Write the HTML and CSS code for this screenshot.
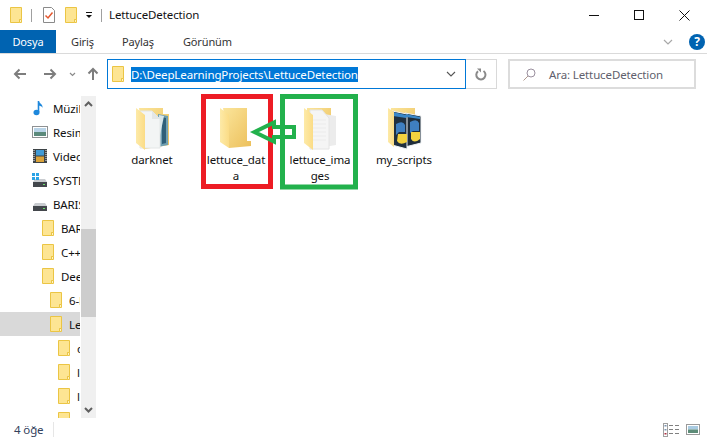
FILE: index.html
```html
<!DOCTYPE html>
<html lang="tr">
<head>
<meta charset="utf-8">
<title>LettuceDetection</title>
<link rel="stylesheet" href="styles.css">
</head>
<body>
<svg class="defs" width="0" height="0" aria-hidden="true">
  <defs>
    <symbol id="mini" viewBox="0 0 16 16">
      <path d="M2.500 .5H13.500V12.500H11.500V15.500H2.500Z" fill="#fde593" stroke="#ebc544"/>
      <path d="M11.500 15.500V12.500H13.500V15.500Z" fill="#fff3c4" stroke="#ebc544"/>
    </symbol>
    <linearGradient id="back" x1="0" y1="0" x2="1" y2="1">
      <stop offset="0" stop-color="#fbe59b"/><stop offset="1" stop-color="#ecbf5a"/>
    </linearGradient>
    <linearGradient id="flap" x1="0" y1="0" x2="1" y2="0">
      <stop offset="0" stop-color="#fdeaa8"/><stop offset="1" stop-color="#fbdc86"/>
    </linearGradient>
    <symbol id="drive" viewBox="0 0 16 16">
      <path d="M3 7H13L15 10H1Z" fill="#c9ccd0"/>
      <rect x="1" y="10" width="14" height="5" fill="#43474c"/>
      <rect x="11" y="12" width="2" height="1" fill="#6de06d"/>
    </symbol>
  </defs>
</svg>

<header class="titlebar">
  <svg class="q-folder" width="16" height="16"><use href="#mini"/></svg>
  <span class="q-sep"></span>
  <svg class="q-check" width="14" height="16" viewBox="0 0 14 16">
    <path d="M1.500 .5H9.500L12.500 3.500V15.500H1.500Z" fill="#fff" stroke="#8a8a8a"/>
    <path d="M3.500 8.500L6 11L10.500 5.500" fill="none" stroke="#e4572e" stroke-width="1.500"/>
  </svg>
  <svg class="q-folder2" width="16" height="16"><use href="#mini"/></svg>
  <svg class="q-drop" width="8" height="8" viewBox="0 0 8 8">
    <rect x="1" y="1" width="6" height="1" fill="#111"/><path d="M1 4H7L4 7Z" fill="#111"/>
  </svg>
  <span class="q-sep q-sep-2"></span>
  <span class="title">LettuceDetection</span>
  <div class="win-controls">
    <svg width="10" height="10" viewBox="0 0 10 10"><rect y="5" width="10" height="1" fill="#111"/></svg>
    <svg width="10" height="10" viewBox="0 0 10 10"><rect x=".5" y=".5" width="9" height="9" fill="none" stroke="#111"/></svg>
    <svg width="11" height="11" viewBox="0 0 11 11"><path d="M.5 .5L10.500 10.500M10.500 .5L.5 10.500" stroke="#111" fill="none"/></svg>
  </div>
</header>

<nav class="ribbon">
  <span class="tab tab-file">Dosya</span>
  <span class="tab tab-home">Giriş</span>
  <span class="tab tab-share">Paylaş</span>
  <span class="tab tab-view">Görünüm</span>
  <svg class="ribbon-chev" width="10" height="6" viewBox="0 0 10 6"><path d="M1 1L5 5L9 1" fill="none" stroke="#a8a8a8" stroke-width="1.200"/></svg>
  <span class="help">?</span>
</nav>

<div class="addressrow">
  <svg class="nav-arrow nav-back" width="14" height="12" viewBox="0 0 14 12"><path d="M13 6H2M6.500 1.500L2 6L6.500 10.500" fill="none" stroke="#7d7d7d" stroke-width="2"/></svg>
  <svg class="nav-arrow nav-fwd" width="14" height="12" viewBox="0 0 14 12"><path d="M1 6H12M7.500 1.500L12 6L7.500 10.500" fill="none" stroke="#7d7d7d" stroke-width="2"/></svg>
  <svg class="nav-down" width="7" height="5" viewBox="0 0 7 5"><path d="M1 1L3.500 3.500L6 1" fill="none" stroke="#8a8a8a" stroke-width="1.200"/></svg>
  <svg class="nav-up" width="12" height="14" viewBox="0 0 12 14"><path d="M6 13V2M1.500 6.500L6 2L10.500 6.500" fill="none" stroke="#7d7d7d" stroke-width="2"/></svg>
  <div class="addressbox">
    <svg width="16" height="16"><use href="#mini"/></svg>
    <span class="path">D:\DeepLearningProjects\LettuceDetection</span>
    <svg class="addr-chev" width="10" height="6" viewBox="0 0 10 6"><path d="M1 1L5 5L9 1" fill="none" stroke="#555" stroke-width="1.100"/></svg>
  </div>
  <div class="refresh">
    <svg width="12" height="13" viewBox="0 0 12 13"><path d="M8.500 3A4.600 4.600 0 1 1 3 3.200" fill="none" stroke="#8a8a8a" stroke-width="2"/><path d="M2 .5H6V4.500Z" fill="#8a8a8a"/></svg>
  </div>
  <div class="searchbox">
    <svg width="13" height="13" viewBox="0 0 13 13"><circle cx="8" cy="5" r="4" fill="none" stroke="#9a8f9e"/><path d="M5 8L.5 12.500" stroke="#b09a8f" fill="none"/></svg>
    <span>Ara: LettuceDetection</span>
  </div>
</div>

<main class="body">
  <aside class="sidebar">
    <div class="tree">
      <div class="row lv0">
        <svg class="ti" width="16" height="16" viewBox="0 0 16 16"><path d="M6.500 1V12" stroke="#1e88dc" stroke-width="1.600"/><ellipse cx="4.500" cy="12.500" rx="3" ry="2.700" fill="#1e88dc"/><path d="M6.500 1C8 4 11 4 10.500 8C10 6 8 6 6.500 5.500Z" fill="#1e88dc"/></svg>
        <span class="lbl">Müzik</span></div>
      <div class="row lv0">
        <svg class="ti" width="16" height="16" viewBox="0 0 16 16"><rect x=".5" y="2.500" width="15" height="11" fill="#fff" stroke="#8e9193"/><rect x="2" y="4" width="12" height="4" fill="#b9d4e8"/><rect x="2" y="8" width="12" height="4" fill="#5b8a7b"/></svg>
        <span class="lbl">Resimler</span></div>
      <div class="row lv0">
        <svg class="ti" width="16" height="16" viewBox="0 0 16 16"><rect x="1" y="1" width="14" height="14" fill="#3d4347"/><rect x="4" y="2" width="8" height="5.500" fill="#3f9ad6"/><rect x="4" y="8.500" width="8" height="5.500" fill="#d9a23a"/><path d="M2 2V14M14 2V14" stroke="#d5d5d5" stroke-dasharray="1 1" stroke-width="1.200"/></svg>
        <span class="lbl">Videolar</span></div>
      <div class="row lv0">
        <svg class="ti" width="16" height="16"><use href="#drive"/></svg>
        <svg class="win-logo" width="7" height="7" viewBox="0 0 7 7"><path d="M0 0H3V3H0ZM4 0H7V3H4ZM0 4H3V7H0ZM4 4H7V7H4Z" fill="#2aa3e6"/></svg>
        <span class="lbl">SYSTEM</span></div>
      <div class="row lv0">
        <svg class="ti" width="16" height="16"><use href="#drive"/></svg>
        <span class="lbl">BARIS</span></div>
      <div class="row lv1"><svg class="ti" width="16" height="16"><use href="#mini"/></svg><span class="lbl">BARIS</span></div>
      <div class="row lv1"><svg class="ti" width="16" height="16"><use href="#mini"/></svg><span class="lbl">C++-Projects</span></div>
      <div class="row lv1"><svg class="ti" width="16" height="16"><use href="#mini"/></svg><span class="lbl">DeepLearning</span></div>
      <div class="row lv2"><svg class="ti" width="16" height="16"><use href="#mini"/></svg><span class="lbl">6-Projects</span></div>
      <div class="row lv2 selected"><svg class="ti" width="16" height="16"><use href="#mini"/></svg><span class="lbl">LettuceDetection</span></div>
      <div class="row lv3"><svg class="ti" width="16" height="16"><use href="#mini"/></svg><span class="lbl">darknet</span></div>
      <div class="row lv3"><svg class="ti" width="16" height="16"><use href="#mini"/></svg><span class="lbl">lettuce_data</span></div>
      <div class="row lv3"><svg class="ti" width="16" height="16"><use href="#mini"/></svg><span class="lbl">lettuce_images</span></div>
      <div class="row lv3"><svg class="ti" width="16" height="16"><use href="#mini"/></svg><span class="lbl">my_scripts</span></div>
    </div>
    <div class="scrollbar">
      <svg class="sb-btn" width="15" height="16" viewBox="0 0 15 16"><path d="M4 10L7.500 6.500L11 10" fill="none" stroke="#606060" stroke-width="2"/></svg>
      <div class="sb-track"><div class="sb-thumb"></div></div>
      <svg class="sb-btn" width="15" height="16" viewBox="0 0 15 16"><path d="M4 6L7.500 9.500L11 6" fill="none" stroke="#606060" stroke-width="2"/></svg>
    </div>
  </aside>

  <section class="files">
    <article class="item">
      <svg width="48" height="48" viewBox="0 0 48 48">
        <path d="M11 3H35V9H41V40L17 44Z" fill="url(#back)"/>
        <path d="M30 9L40 11V40L30 42Z" fill="#6f9fb2"/>
        <path d="M34 12L38 13V38L34 39Z" fill="#2f5f78"/>
        <path d="M31 10L36 11L30 40Z" fill="#d7e6ea"/>
        <path d="M12 6H24L32 14V43H12Z" fill="#f3f5f5" stroke="#e3e6e6"/>
        <path d="M24 6V14H32" fill="#e4e7e7"/>
        <path d="M8 3L17 10V45L8 38Z" fill="url(#flap)"/>
      </svg>
      <span class="name">darknet</span>
    </article>
    <article class="item">
      <svg width="48" height="48" viewBox="0 0 48 48">
        <path d="M11 3H35V36H39V41L17 43Z" fill="url(#back)"/>
        <path d="M8 3L17 10V43L8 37Z" fill="url(#flap)"/>
      </svg>
      <span class="name">lettuce_data</span>
    </article>
    <article class="item">
      <svg width="48" height="48" viewBox="0 0 48 48">
        <path d="M11 3H35V37H11Z" fill="url(#back)"/>
        <path d="M28 9L40 11V40L28 42Z" fill="#ececec"/>
        <path d="M14 5H26L33 13V44H14Z" fill="#f5f5f5" stroke="#e4e4e4"/>
        <path d="M17 15H30M17 19H30M17 23H30M17 27H30M17 31H30M17 35H30" stroke="#ebebeb"/>
        <path d="M8 3L17 10V45L8 38Z" fill="url(#flap)"/>
      </svg>
      <span class="name">lettuce_images</span>
    </article>
    <article class="item">
      <svg width="48" height="48" viewBox="0 0 48 48">
        <path d="M11 3H35V37H11Z" fill="url(#back)"/>
        <path d="M25 8L41 11V38L25 42Z" fill="#1f2d3a" stroke="#f1f4f6"/>
        <path d="M12 6L27 9V44L12 40Z" fill="#20303f" stroke="#f1f4f6"/>
        <path d="M13 7L26 10V13L13 11Z" fill="#3a87c8"/>
        <path d="M26 9L40 12V14L26 12Z" fill="#3a87c8"/>
        <path d="M16 19Q23 15 25 20V27H19L16 30Z" fill="#3f7fc0"/>
        <path d="M18 29H27V37Q20 41 17 36Z" fill="#f3d23f"/>
        <path d="M30 17Q37 13 39 18V26H33L30 28Z" fill="#3f7fc0"/>
        <path d="M31 27H40V34Q34 39 31 34Z" fill="#f3d23f"/>
        <path d="M8 3L14 7V42L8 37Z" fill="url(#flap)"/>
      </svg>
      <span class="name">my_scripts</span>
    </article>

    <svg class="annot" width="170" height="100" viewBox="0 0 170 100">
      <rect x="3.500" y="2.500" width="67" height="90" fill="none" stroke="#ed1c24" stroke-width="5"/>
      <rect x="82.500" y="2.500" width="73" height="90.500" fill="none" stroke="#22b14c" stroke-width="5"/>
      <path d="M54.500 38L74 28.500V33H94V43H74V47.500Z" fill="none" stroke="#22b14c" stroke-width="4"/>
    </svg>
  </section>
</main>

<footer class="status">
  <span class="count">4 öğe</span>
  <span class="st-sep"></span>
  <div class="views">
    <svg width="16" height="14" viewBox="0 0 16 14"><rect x=".5" y=".5" width="4" height="13" fill="#fff" stroke="#a0a0a0"/><path d="M1.500 2H3.500V3.500H1.500ZM1.500 6H3.500V7.500H1.500Z" fill="#7a93b0"/><rect x="1.500" y="10" width="2" height="1.500" fill="#b03040"/><path d="M6 2.500H10M12 2.500H16M6 6.500H10M12 6.500H16M6 10.500H10M12 10.500H16" stroke="#808080"/></svg>
    <svg width="14" height="11" viewBox="0 0 14 11"><rect x=".5" y=".5" width="13" height="10" fill="#fff" stroke="#9a9a9a"/><rect x="2" y="2" width="10" height="3.500" fill="#a9cbe2"/><rect x="2" y="5.500" width="10" height="3.500" fill="#5d8c78"/></svg>
  </div>
</footer>
</body>
</html>
```

FILE: styles.css
```css
* { box-sizing: border-box; }
html, body { margin: 0; height: 100%; }
body {
  width: 707px;
  height: 441px;
  overflow: hidden;
  background: #fff;
  color: #111;
  font-family: "Noto Sans", "Open Sans", sans-serif;
  font-size: 11.500px;
  letter-spacing: -0.12px;
  display: flex;
  flex-direction: column;
}
svg { display: block; flex: none; }
.defs { position: absolute; }

.titlebar { height: 30px; display: flex; align-items: center; padding-left: 8px; flex: none; }
.q-sep { width: 1px; height: 13px; background: #a0a0a0; margin-left: 7px; }
.q-check { margin-left: 10px; }
.q-folder2 { margin-left: 7px; }
.q-drop { margin-left: 6px; }
.q-sep-2 { margin-left: 8px; }
.title { margin-left: 7px; padding-bottom: 2px; }
.win-controls { margin-left: auto; display: flex; align-items: center; gap: 35px; padding-right: 17px; }

.ribbon { height: 24px; display: flex; align-items: center; position: relative; border-bottom: 1px solid #dadada; flex: none; }
.tab { color: #333; font-size: 11px; }
.tab-file { width: 56px; height: 23px; background: #0063b1; color: #fff; display: flex; align-items: center; justify-content: center; }
.tab-home { margin-left: 15px; }
.tab-share { margin-left: 28px; }
.tab-view { margin-left: 29px; }
.ribbon-chev { margin-left: auto; margin-right: 16px; }
.help { width: 16px; height: 16px; border-radius: 50%; background: #0063b1; color: #fff; font-weight: 700; font-size: 12px; line-height: 16px; text-align: center; margin-right: 2px; }

.addressrow { height: 42px; padding: 5px 0 7px 13px; display: flex; align-items: stretch; flex: none; }
.nav-arrow, .nav-down, .nav-up { align-self: center; }
.nav-fwd { margin-left: 16px; }
.nav-down { margin-left: 12px; }
.nav-up { margin-left: 11px; }
.addressbox { margin-left: 8px; width: 359px; border: 1px solid #0078d7; display: flex; align-items: center; padding-left: 2px; }
.path { margin-left: 5px; background: #0078d7; color: #fff; line-height: 15px; height: 15px; white-space: nowrap; }
.addr-chev { margin-left: auto; margin-right: 9px; }
.refresh { width: 31px; border: 1px solid #d9d9d9; border-left: 0; display: flex; align-items: center; justify-content: center; }
.searchbox { margin-left: 11px; width: 188px; border: 2px solid #dcdcdc; display: flex; align-items: center; padding-left: 13px; gap: 13px; color: #5f5f6d; }

.body { flex: 1; min-height: 0; display: flex; }
.sidebar { width: 97px; flex: none; display: flex; }
.tree { width: 80px; margin-right: 1px; flex: none; overflow: hidden; }
.row { height: 24px; display: flex; align-items: center; gap: 5px; white-space: nowrap; position: relative; }
.lv0 { padding-left: 32px; }
.lv1 { padding-left: 40px; }
.lv2 { padding-left: 48px; }
.lv3 { padding-left: 56px; }
.selected { background: #d9d9d9; }
.win-logo { position: absolute; left: 32px; top: 5px; }
.scrollbar { width: 15px; background: #f0f0f0; display: flex; flex-direction: column; flex: none; }
.sb-track { flex: 1; padding-top: 117px; }
.sb-thumb { height: 88px; background: #cdcdcd; }

.files { flex: 1; position: relative; display: flex; align-items: flex-start; padding: 9px 0 0 13px; }
.item { width: 84px; display: flex; flex-direction: column; align-items: center; flex: none; }
.name { width: 62px; margin-top: -1px; text-align: center; overflow-wrap: anywhere; line-height: 16px; }
.annot { position: absolute; left: 103px; top: -2px; }

.status { height: 23px; display: flex; align-items: center; padding: 0 7px 0 14px; flex: none; color: #33415c; }
.st-sep { width: 1px; height: 15px; background: #e6e6e6; margin-left: 10px; }
.views { margin-left: auto; display: flex; align-items: center; gap: 7px; }
```
